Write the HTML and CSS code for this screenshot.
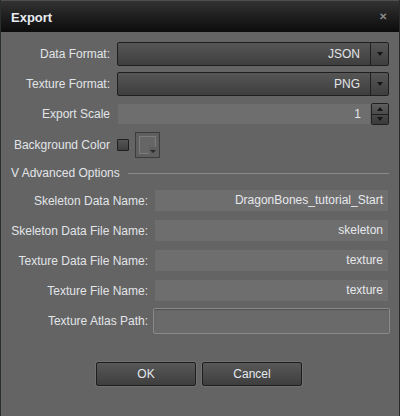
FILE: index.html
```html
<!DOCTYPE html>
<html>
<head>
<meta charset="utf-8">
<link rel="stylesheet" href="styles.css">
</head>
<body>
<div class="window">
  <div class="titlebar">
    <span class="title">Export</span>
    <span class="close">✕</span>
  </div>
  <div class="content">
    <div class="grid main">
      <label>Data Format:</label>
      <div class="select"><span class="val">JSON</span><span class="arrow"><i></i></span></div>
      <label>Texture Format:</label>
      <div class="select"><span class="val">PNG</span><span class="arrow"><i></i></span></div>
      <label>Export Scale</label>
      <div class="numrow">
        <div class="num">1</div>
        <div class="spin"><span class="up"><i></i></span><span class="down"><i></i></span></div>
      </div>
      <label>Background Color</label>
      <div class="colorrow">
        <span class="check"></span>
        <span class="swatch"><span class="swatch-in"></span><i></i></span>
      </div>
    </div>
    <div class="adv"><span>V Advanced Options</span><span class="rule"></span></div>
    <div class="grid advgrid">
      <label>Skeleton Data Name:</label>
      <div class="field">DragonBones_tutorial_Start</div>
      <label>Skeleton Data File Name:</label>
      <div class="field">skeleton</div>
      <label>Texture Data File Name:</label>
      <div class="field">texture</div>
      <label>Texture File Name:</label>
      <div class="field">texture</div>
      <label>Texture Atlas Path:</label>
      <div class="field path"></div>
    </div>
    <div class="buttons">
      <button class="btn">OK</button>
      <button class="btn">Cancel</button>
    </div>
  </div>
</div>
</body>
</html>
```
FILE: styles.css
```css
html, body {
  margin: 0;
  padding: 0;
  background: #646464;
}
body {
  width: 400px;
  height: 416px;
  overflow: hidden;
  font-family: "Liberation Sans", Arial, sans-serif;
  font-size: 12px;
  color: #e2e4e8;
}
.window {
  width: 398px;
  height: 416px;
  border-left: 1px solid #29302a;
  border-right: 1px solid #2a2a2a;
  background: #646464;
  display: flex;
  flex-direction: column;
}
.titlebar {
  height: 32px;
  border-top: 1px solid #4e4e4e;
  background: linear-gradient(#333333, #202020 45%, #0c0c0c);
  display: flex;
  align-items: center;
  justify-content: space-between;
  padding: 0 10px 0 10px;
  box-sizing: border-box;
  flex: none;
}
.title {
  font-weight: bold;
  font-size: 13px;
  color: #e8ecf2;
  padding-top: 1px;
}
.close {
  font-size: 10px;
  color: #8a8a8a;
  font-weight: bold;
  padding-right: 2px;
}
.content {
  flex: 1;
  display: flex;
  flex-direction: column;
  padding: 10px 0 0 0;
}
.grid {
  display: grid;
  align-items: center;
}
.main {
  grid-template-columns: 109px 272px;
  column-gap: 7px;
  row-gap: 6px;
  grid-template-rows: 24px 24px 24px 26px;
}
label {
  text-align: right;
  white-space: nowrap;
}
.select {
  height: 24px;
  box-sizing: border-box;
  border: 1px solid #1f1f1f;
  border-radius: 2px;
  background: linear-gradient(#565656, #3e3e3e);
  display: flex;
  align-items: stretch;
}
.select .val {
  flex: 1;
  text-align: right;
  padding-right: 10px;
  line-height: 22px;
}
.select .arrow {
  width: 17px;
  border-left: 1px solid #1f1f1f;
  display: flex;
  align-items: center;
  justify-content: center;
}
.arrow i, .down i {
  width: 0;
  height: 0;
  border-left: 3.5px solid transparent;
  border-right: 3.5px solid transparent;
  border-top: 4px solid #151515;
}
.up i {
  width: 0;
  height: 0;
  border-left: 3.5px solid transparent;
  border-right: 3.5px solid transparent;
  border-bottom: 4px solid #151515;
}
.numrow {
  display: flex;
  align-items: center;
  gap: 1px;
}
.num {
  flex: 1;
  height: 20px;
  margin-left: 1px;
  background: #6e6e6e;
  text-align: right;
  padding-right: 9px;
  line-height: 20px;
  color: #e4e6ea;
}
.spin {
  width: 18px;
  height: 22px;
  box-sizing: border-box;
  border: 1px solid #1f1f1f;
  border-radius: 2px;
  display: flex;
  flex-direction: column;
}
.spin span {
  flex: 1;
  display: flex;
  align-items: center;
  justify-content: center;
}
.spin .up {
  background: linear-gradient(#5e5e5e, #4a4a4a);
  border-bottom: 1px solid #1f1f1f;
}
.spin .down {
  background: linear-gradient(#484848, #3a3a3a);
}
.colorrow {
  display: flex;
  align-items: center;
  gap: 6px;
}
.check {
  width: 12px;
  height: 12px;
  box-sizing: border-box;
  border: 1px solid #1f1f1f;
  background: linear-gradient(#555, #3f3f3f);
  border-radius: 1px;
}
.swatch {
  position: relative;
  width: 25px;
  height: 26px;
  box-sizing: border-box;
  border: 1px solid #3c3c3c;
  background: #5f5f5f;
  display: flex;
  padding: 3px;
}
.swatch-in {
  flex: 1;
  border: 1px solid #7c7c7c;
  background: #666;
  clip-path: polygon(0 0, 100% 0, 100% 60%, 60% 60%, 60% 100%, 0 100%);
}
.swatch i {
  position: absolute;
  right: 3px;
  bottom: 4px;
  width: 0;
  height: 0;
  border-left: 3px solid transparent;
  border-right: 3px solid transparent;
  border-top: 3px solid #2a2a2a;
}
.adv {
  display: flex;
  align-items: center;
  gap: 8px;
  margin: 7px 10px 0 10px;
  height: 16px;
}
.adv .rule {
  flex: 1;
  height: 1px;
  background: #8a8a8a;
  margin-top: 1px;
}
.advgrid {
  margin-top: 9px;
  grid-template-columns: 147px 233px;
  column-gap: 7px;
  row-gap: 9px;
  grid-template-rows: 21px 21px 21px 21px 21px;
}
.field {
  height: 21px;
  background: #6e6e6e;
  text-align: right;
  padding-right: 5px;
  line-height: 21px;
  color: #e6e8ec;
}
.field.path {
  height: 26px;
  box-sizing: border-box;
  margin-left: -2px;
  margin-right: -2px;
  border: 1px solid #8a8a8a;
  border-radius: 2px;
  background: #6a6a6a;
  box-shadow: inset 0 1px 1px rgba(0,0,0,0.25);
}
.buttons {
  display: flex;
  justify-content: center;
  gap: 6px;
  margin-top: 31px;
  padding-right: 2px;
}
.btn {
  width: 100px;
  height: 24px;
  border: 1px solid #1e1e1e;
  border-radius: 2px;
  background: linear-gradient(#585858, #3e3e3e);
  color: #e4e8ee;
  font-family: "Liberation Sans", Arial, sans-serif;
  font-size: 12px;
  padding: 0;
  box-shadow: 0 0 0 1px #707070;
}
```
